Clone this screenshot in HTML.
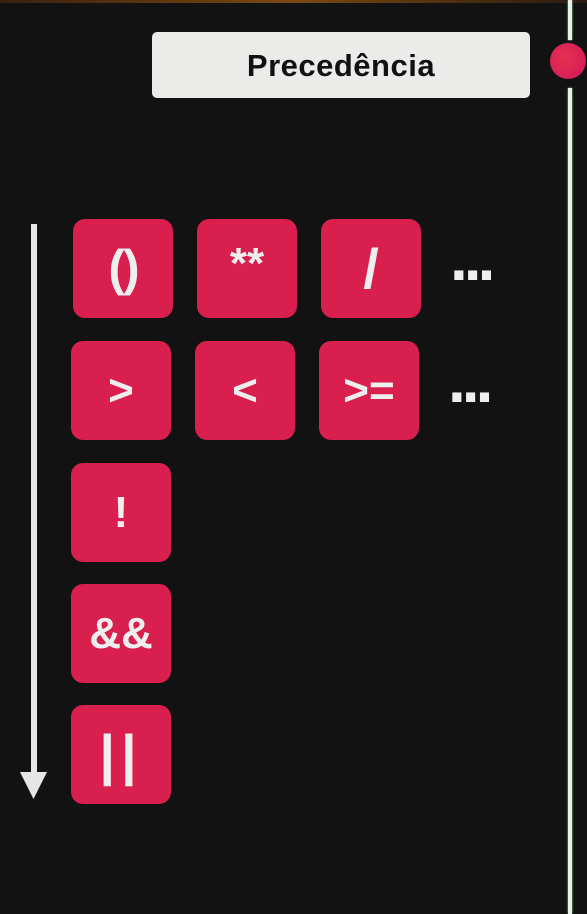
<!DOCTYPE html>
<html><head><meta charset="utf-8"><style>
html,body{margin:0;padding:0}
body{width:587px;height:914px;background:#121212;position:relative;overflow:hidden;font-family:"Liberation Sans",sans-serif}
.top{position:absolute;left:0;top:0;width:587px;height:3px;background:linear-gradient(90deg,#3a2010,#7a4a10,#2a1a10)}
.lbl{position:absolute;left:152px;top:32px;width:378px;height:66px;background:#ebebea;border-radius:5px;text-align:center;line-height:68px;font-size:31px;font-weight:bold;color:#111;letter-spacing:0.5px}
.vl{position:absolute;left:568px;width:4px;background:#e8f0e8;box-shadow:0 0 2px #9c9}
.dot{position:absolute;left:550px;top:43px;width:36px;height:36px;border-radius:50%;background:radial-gradient(circle at 40% 40%,#e83050,#d0185a)}
.b{position:absolute;width:100px;height:99px;background:#d81f4d;border-radius:12px;color:#eee;font-weight:bold;font-size:44px;text-align:center;line-height:99px}
.dots{position:absolute;color:#eee;font-weight:bold;font-size:64px;line-height:20px;letter-spacing:-4px}
.arrow{position:absolute;left:31px;top:224px;width:6px;height:552px;background:#e6e6e6}
</style></head><body>
<div class="top"></div>
<div class="lbl">Precedência</div>
<div class="vl" style="top:0;height:40px"></div>
<div class="vl" style="top:88px;height:826px"></div>
<div class="dot"></div>
<div class="arrow"></div>
<svg style="position:absolute;left:19px;top:771px" width="30" height="30"><polygon points="1,1 28,1 14.5,28" fill="#e6e6e6"/></svg>
<div class="b" style="left:73px;top:219px;font-size:50px;letter-spacing:-2px">()</div>
<div class="b" style="left:197px;top:219px;line-height:90px">**</div>
<div class="b" style="left:321px;top:219px;font-size:56px">/</div>
<div class="dots" style="left:450px;top:248px">...</div>
<div class="b" style="left:71px;top:341px">&gt;</div>
<div class="b" style="left:195px;top:341px">&lt;</div>
<div class="b" style="left:319px;top:341px">&gt;=</div>
<div class="dots" style="left:448px;top:370px">...</div>
<div class="b" style="left:71px;top:463px">!</div>
<div class="b" style="left:71px;top:584px">&amp;&amp;</div>
<div class="b" style="left:71px;top:705px;font-size:56px;letter-spacing:6px">||</div>
</body></html>
